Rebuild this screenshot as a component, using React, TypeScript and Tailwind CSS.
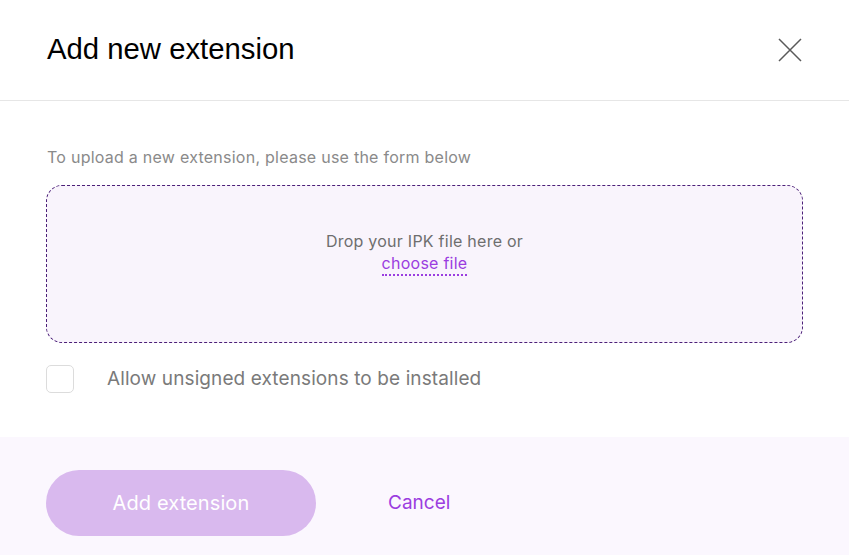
export default function App() {
  return (
    <div className="w-[849px] h-[555px] bg-white flex flex-col font-['Inter',sans-serif] overflow-hidden">
      <div className="h-[101px] shrink-0 flex items-center justify-between pl-[47px] pr-[47px] border-b border-[#e6e6e6]">
        <h1 className="text-[29.3px] leading-none text-black font-['Liberation_Sans',Arial,sans-serif] -mt-[3px]">
          Add new extension
        </h1>
        <button className="w-[24px] h-[24px] -mt-[1px] text-[#5a5a5a]" aria-label="Close">
          <svg viewBox="0 0 24 24" width="24" height="24" fill="none" stroke="currentColor" strokeWidth="1.5">
            <path d="M1 1 L23 23 M23 1 L1 23" />
          </svg>
        </button>
      </div>

      <div className="flex-1 px-[46px] pt-[45px]">
        <p className="text-[16px] tracking-[0.25px] text-[#8a8a8a] leading-[22px] pl-[1px]">
          To upload a new extension, please use the form below
        </p>
        <div className="mt-[17px] h-[158px] rounded-[16px] border border-dashed border-[#4b1f78] bg-[#f9f4fc] flex flex-col items-center justify-center pb-[22px]">
          <span className="text-[16px] tracking-[0.25px] leading-[22px] text-[#6e6e6e]">Drop your IPK file here or</span>
          <span className="text-[16px] tracking-[0.25px] leading-[22px] text-[#9b3de0] border-b-2 border-dotted border-[#9b3de0]">
            choose file
          </span>
        </div>
        <label className="mt-[22px] flex items-center">
          <span className="w-[28px] h-[28px] rounded-[5px] border border-[#dcdcdc] bg-white shrink-0" />
          <span className="ml-[33px] text-[19px] tracking-[0.1px] text-[#7a7a7a] leading-[24px]">
            Allow unsigned extensions to be installed
          </span>
        </label>
      </div>

      <div className="h-[118px] shrink-0 bg-[#fbf7fe] flex items-center px-[46px] pt-[14px]">
        <button className="w-[270px] h-[66px] rounded-full bg-[#d9b9ee] text-white text-[20px] tracking-[0.1px]">
          Add extension
        </button>
        <button className="ml-[72px] text-[19px] text-[#9b3de0]">Cancel</button>
      </div>
    </div>
  )
}
